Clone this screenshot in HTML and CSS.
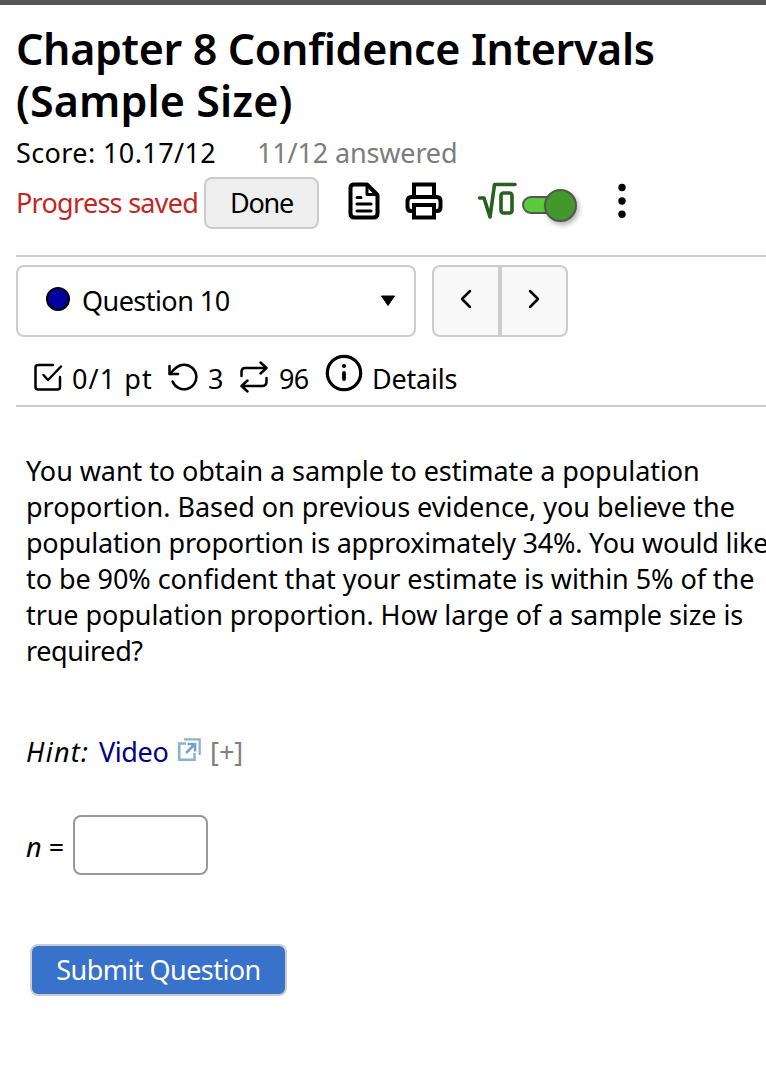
FILE: index.html
```html
<!DOCTYPE html>
<html lang="en">

<head>
    <meta charset="UTF-8">
    <meta name="viewport" content="width=device-width, initial-scale=1.0">
    <title>Chapter 8 Confidence Intervals (Sample Size)</title>
    <link rel="stylesheet" href="styles.css">
</head>

<body>
    <header>
        <h1><span class="title-top">Chapter 8 Confidence Intervals</span><br><span class="title-end">(Sample Size)</span></h1>
        <div class="score-row">
            <span class="score">Score: 10.17/12</span>
            <span class="answered">11/12 answered</span>
        </div>
        <div class="toolbar">
            <span class="saved">Progress saved</span>
            <button type="button" class="done">Done</button>
            <svg class="icon-file" width="32" height="38" viewBox="0 0 32 38" fill="none" stroke="#000" stroke-width="4" stroke-linejoin="round" stroke-linecap="round">
                <path d="M5 2.5H19L29.5 13V31.5Q29.5 35.5 25.5 35.5H6.5Q2.5 35.5 2.5 31.5V6Q2.5 2.5 6 2.5Z" />
                <path d="M19 3V12.5H29" stroke-width="3" />
                <path d="M9 15.5H13M9 22H23M9 29H23" stroke-width="3" />
            </svg>
            <svg class="icon-print" width="38" height="38" viewBox="0 0 38 38" fill="none" stroke="#000" stroke-width="4">
                <path d="M9 15V2.500H29V15" />
                <path d="M9 29H6Q2.500 29 2.500 25V19Q2.500 15 6.500 15H31.500Q35.500 15 35.500 19V25Q35.500 29 32 29H29" />
                <path d="M9 23H29V35.500H9Z" />
            </svg>
            <svg class="icon-root" width="40" height="38" viewBox="0 0 40 38" fill="none" stroke="#286020" stroke-width="3.6" stroke-linejoin="round" stroke-linecap="round">
                <path d="M2.500 16H7L13 35L17.500 2.500H38" />
                <rect x="24" y="11" width="11" height="20" rx="2.500" />
            </svg>
            <span class="toggle"><span class="knob"></span></span>
            <svg class="icon-more" width="8" height="36" viewBox="0 0 8 36">
                <circle cx="4" cy="4.5" r="3.7" />
                <circle cx="4" cy="18" r="3.7" />
                <circle cx="4" cy="31.3" r="3.7" />
            </svg>
        </div>
    </header>

    <nav>
        <div class="picker">
            <div class="select">
                <span class="dot"></span>
                <span class="qname">Question 10</span>
                <svg class="caret" width="16" height="12" viewBox="0 0 16 12">
                    <path d="M1.5 1H14.5L8 10.5Z" stroke="#000" stroke-linejoin="round" />
                </svg>
            </div>
            <div class="arrows">
                <button type="button" aria-label="Previous">
                    <svg width="12" height="20" viewBox="0 0 12 20"><path d="M10 2L2 10L10 18" /></svg>
                </button>
                <button type="button" aria-label="Next">
                    <svg width="12" height="20" viewBox="0 0 12 20"><path d="M2 2L10 10L2 18" /></svg>
                </button>
            </div>
        </div>
        <div class="stats">
            <svg class="icon-check" width="30" height="30" viewBox="0 0 30 30">
                <path d="M19 3H4Q1.500 3 1.500 5.500V25Q1.500 27.500 4 27.500H23.500Q26 27.500 26 25V15" />
                <path d="M9.500 13L14 18L27 4.500" />
            </svg>
            <span class="points">0/1 pt</span>
            <svg class="icon-undo" width="30" height="28" viewBox="0 0 30 28">
                <path d="M1.500 3V11H10" />
                <path d="M2 11C7 4.500 10.500 1.700 16 1.700A12.300 12.300 0 1 1 4.600 18.500" />
            </svg>
            <span class="tries">3</span>
            <svg class="icon-loop" width="28" height="32" viewBox="0 0 28 32">
                <path d="M1.500 15V11Q1.500 7 5.500 7H26M20.500 1.500L26.500 7L20.500 12.500" />
                <path d="M26.500 17V20.500Q26.500 25 22 25H2M7.500 19.500L1.500 25L7.500 30.500" />
            </svg>
            <span class="versions">96</span>
            <svg class="icon-info" width="38" height="38" viewBox="0 0 38 38">
                <circle cx="19" cy="19" r="16.7" stroke-width="3.2" />
                <path d="M19 19V25" stroke-width="3.8" />
                <circle cx="19" cy="12" r="2.1" fill="#000" stroke="none" />
            </svg>
            <span class="details">Details</span>
        </div>
    </nav>

    <main>
        <p>
            <span class="l1">You want to obtain a sample to estimate a population</span><br>
            <span class="l2">proportion. Based on previous evidence, you believe the</span><br>
            <span class="l3">population proportion is approximately 34%. You would like</span><br>
            <span class="l4">to be 90% confident that your estimate is within 5% of the</span><br>
            <span class="l5">true population proportion. How large of a sample size is</span><br>
            <span class="l6">required?</span>
        </p>
        <div class="hint">
            <em>Hint:</em>
            <a href="#">Video</a>
            <svg width="24" height="24" viewBox="0 0 24 24" fill="none" stroke="#8eb0d1" stroke-width="2.6">
                <path d="M9 5.500H2.200V21.800H17.500V15" />
                <path d="M7 1.300H22.700V17" stroke-width="2.2" />
                <path d="M9 15L17.500 6.500M10.500 6H18V13.500" stroke="#7ba1c8" />
            </svg>
            <span class="expand">[+]</span>
        </div>
        <div class="answer">
            <label for="n"><em>n</em> =</label>
            <input type="text" id="n">
        </div>
        <button type="submit" class="submit">Submit Question</button>
    </main>
</body>

</html>
```

FILE: styles.css
```css
body {
    font-family: "Trebuchet MS", "Noto Sans", sans-serif;
    font-size: 27px;
    line-height: 36px;
    margin: 0;
    color: #000;
    background-color: #fff;
    border-top: 5px solid #575757;
    overflow: hidden;
    white-space: nowrap;
}

button,
input {
    font: inherit;
    box-sizing: border-box;
    padding: 0;
}

svg {
    flex: none;
}

header {
    margin-left: 16px;
    border-bottom: 2px solid #ccc;
    padding-top: 18px;
    box-sizing: border-box;
    height: 252px;
}

h1 {
    margin: 0;
    font-size: 43px;
    font-weight: 600;
    line-height: 52px;
}

.title-top {
    letter-spacing: -0.34px;
}

.title-end {
    letter-spacing: 0.1px;
}

.score-row {
    display: flex;
    margin-top: 8px;
}

.score {
    width: 241px;
    letter-spacing: 0.4px;
}

.answered {
    color: #7c7c7c;
    letter-spacing: -0.15px;
}

.toolbar {
    display: flex;
    align-items: center;
    margin-top: 6px;
    height: 52px;
}

.saved {
    width: 188px;
    color: #c1271f;
    letter-spacing: -0.72px;
}

.done {
    width: 115px;
    height: 52px;
    background-color: #eee;
    border: 2px solid #ccc;
    border-radius: 8px;
    color: #000;
    letter-spacing: -1.2px;
}

.icon-file {
    margin: -4px 0 0 29px;
}

.icon-print {
    margin: -4px 0 0 25px;
}

.icon-root {
    margin: -4px 0 0 34px;
}

.toggle {
    display: flex;
    align-items: center;
    justify-content: flex-end;
    box-sizing: border-box;
    width: 54px;
    height: 18px;
    margin: 4px 0 0 5px;
    background-color: #5bcb3b;
    border: 2px solid #555;
    border-radius: 9px;
}

.knob {
    flex: none;
    box-sizing: border-box;
    width: 33px;
    height: 33px;
    margin-right: -3px;
    background-color: #43982b;
    border: 2px solid #555;
    border-radius: 50%;
    box-shadow: 2px 3px 5px rgba(0, 0, 0, 0.3);
}

.icon-more {
    margin: -4px 0 0 42px;
}

nav {
    margin-left: 16px;
    height: 150px;
    box-sizing: border-box;
    border-bottom: 2px solid #ccc;
    padding-top: 8px;
}

.picker {
    display: flex;
    gap: 16px;
}

.select {
    display: flex;
    align-items: center;
    box-sizing: border-box;
    width: 400px;
    height: 72px;
    padding: 0 18px 0 28px;
    border: 2px solid #ccc;
    border-radius: 8px;
}

.dot {
    box-sizing: border-box;
    width: 24px;
    height: 24px;
    margin: -4px 12px 0 0;
    background-color: #00009f;
    border: 2px solid #000;
    border-radius: 50%;
}

.qname {
    letter-spacing: -0.55px;
}

.caret {
    margin-left: auto;
}

.arrows {
    display: flex;
}

.arrows button {
    width: 68px;
    height: 72px;
    background-color: #f8f8f8;
    border: 2px solid #ccc;
    border-radius: 8px 0 0 8px;
    display: flex;
    align-items: center;
    justify-content: center;
    padding-bottom: 4px;
}

.arrows button + button {
    border-radius: 0 8px 8px 0;
}

.arrows svg,
.stats svg {
    fill: none;
    stroke: #000;
    stroke-width: 2.5;
    stroke-linecap: round;
    stroke-linejoin: round;
}

.stats {
    display: flex;
    align-items: center;
    padding: 6px 0 0 18px;
    height: 78px;
    box-sizing: border-box;
}

.stats svg {
    margin-top: -4px;
}

.points {
    width: 96px;
    margin-left: 8px;
    letter-spacing: 1.1px;
}

.tries {
    width: 32px;
    margin-left: 10px;
}

.versions {
    width: 46px;
    margin-left: 11px;
    letter-spacing: -0.8px;
}

.stats .icon-info {
    margin-top: -12px;
}

.details {
    margin-left: 9px;
    letter-spacing: -0.2px;
}

main {
    padding: 46px 0 0 26px;
}

p {
    margin: 0;
}

.l1 {
    letter-spacing: -0.07px;
}

.l2 {
    letter-spacing: -0.02px;
}

.l3 {
    letter-spacing: -0.23px;
}

.l4 {
    letter-spacing: -0.06px;
}

.l5 {
    letter-spacing: -0.07px;
}

.l6 {
    letter-spacing: -0.4px;
}

.hint {
    display: flex;
    align-items: center;
    margin-top: 65px;
}

.hint em {
    width: 64px;
    letter-spacing: 1.3px;
}

.hint a {
    width: 78px;
    margin-left: 9px;
    color: #00008b;
    text-decoration: none;
    letter-spacing: -0.4px;
}

.hint svg {
    margin-top: -5px;
}

.expand {
    margin-left: 9px;
    color: #808080;
}

.answer {
    display: flex;
    align-items: center;
    margin-top: 45px;
}

.answer label {
    width: 47px;
    padding-top: 4px;
}

.answer input {
    width: 135px;
    height: 60px;
    padding: 0 10px;
    border: 2px solid #999;
    border-radius: 8px;
}

.submit {
    display: block;
    width: 257px;
    height: 52px;
    margin: 69px 0 0 4px;
    background-color: #3872cb;
    border: 2px solid #ccc;
    border-radius: 8px;
    color: #fff;
    letter-spacing: -0.55px;
}
```
